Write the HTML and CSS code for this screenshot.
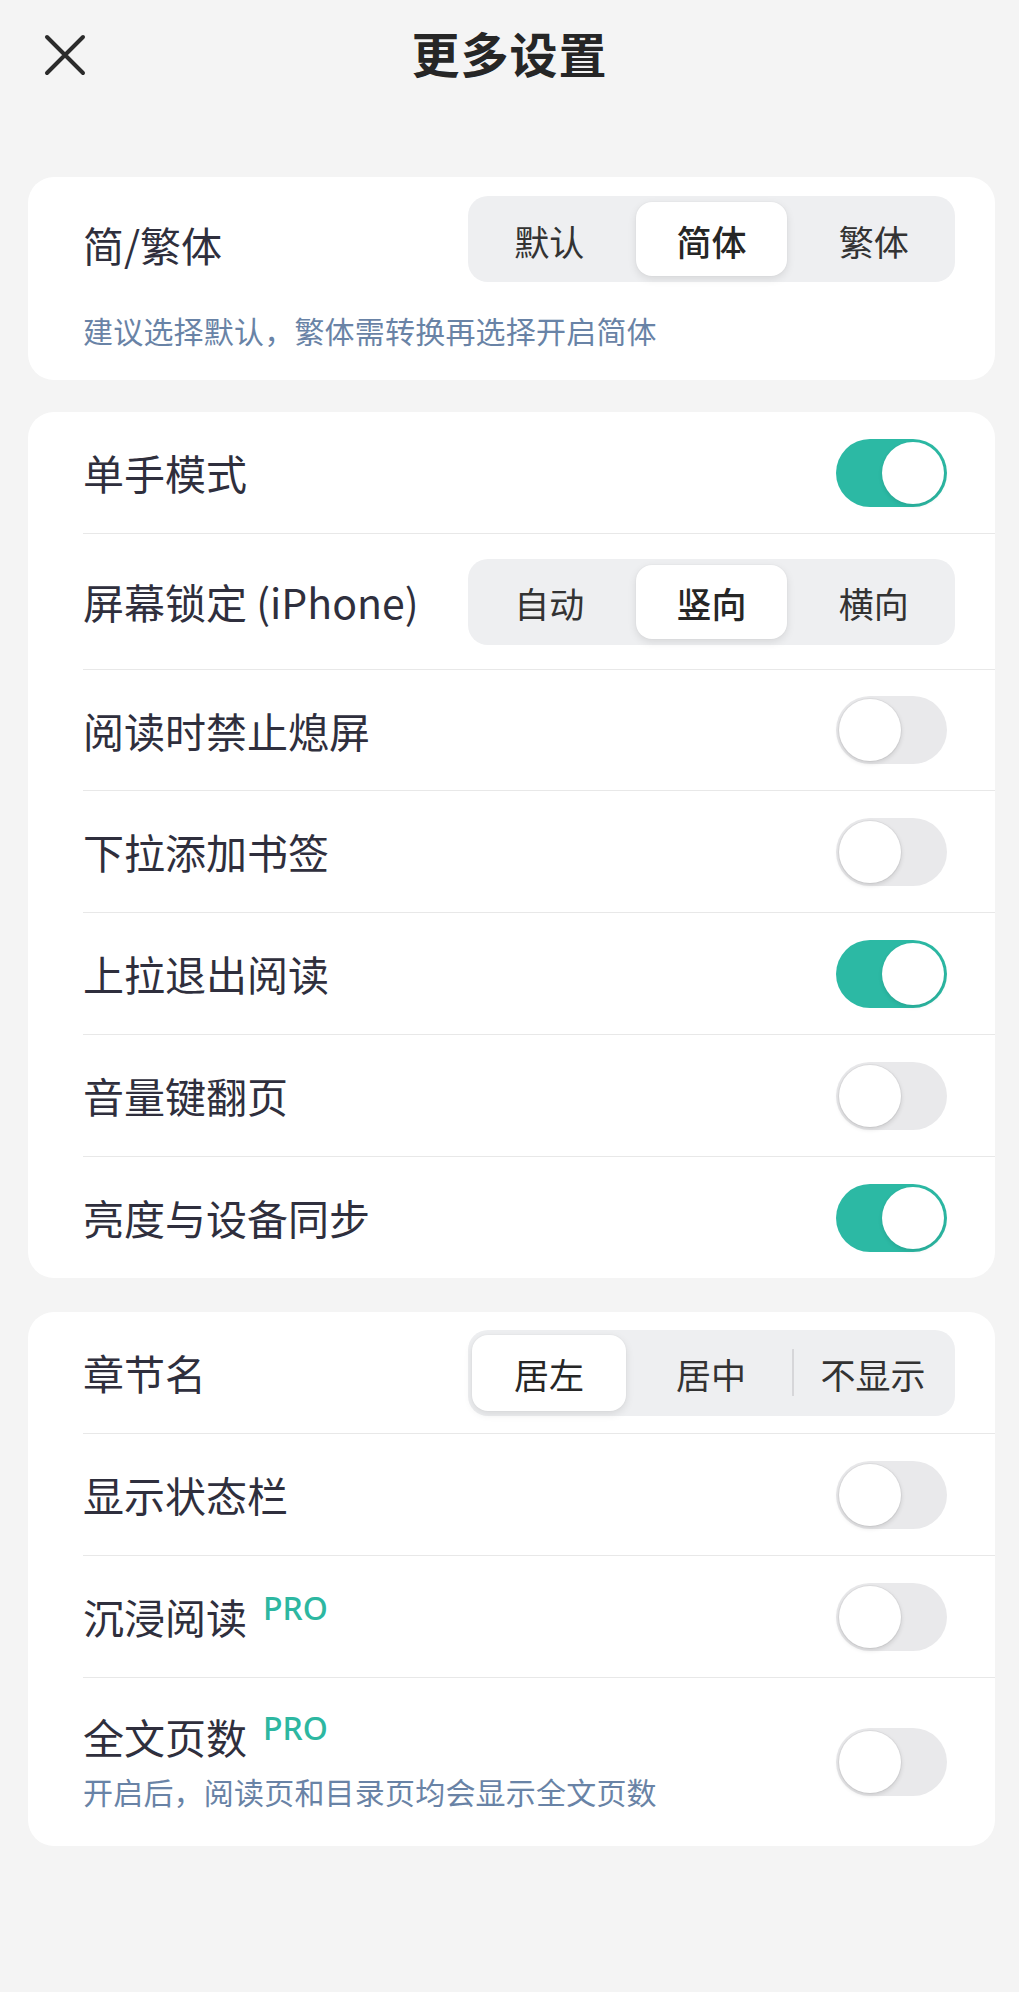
FILE: index.html
```html
<!DOCTYPE html>
<html lang="zh-CN">
<head>
<meta charset="utf-8">
<title>更多设置</title>
<link rel="stylesheet" href="styles.css">
</head>
<body>
<div class="page">
  <header class="header">
    <div class="close">
      <svg width="42" height="42" viewBox="0 0 42 42"><path d="M3 3 L39 39 M39 3 L3 39" stroke="#2b2b2b" stroke-width="4" stroke-linecap="round" fill="none"/></svg>
    </div>
    <h1 class="title">更多设置</h1>
    <div></div>
  </header>

  <section class="card card-first">
    <div class="row-simple">
      <span class="label">简/繁体</span>
      <div class="seg">
        <span class="seg-item">默认</span>
        <span class="seg-item active">简体</span>
        <span class="seg-item">繁体</span>
      </div>
    </div>
    <p class="hint hint-first">建议选择默认，繁体需转换再选择开启简体</p>
  </section>

  <section class="card card-second">
    <div class="row">
      <span class="label">单手模式</span>
      <span class="toggle on"><span class="knob"></span></span>
    </div>
    <div class="row tall">
      <span class="label">屏幕锁定 (iPhone)</span>
      <div class="seg">
        <span class="seg-item">自动</span>
        <span class="seg-item active">竖向</span>
        <span class="seg-item">横向</span>
      </div>
    </div>
    <div class="row short">
      <span class="label">阅读时禁止熄屏</span>
      <span class="toggle"><span class="knob"></span></span>
    </div>
    <div class="row">
      <span class="label">下拉添加书签</span>
      <span class="toggle"><span class="knob"></span></span>
    </div>
    <div class="row">
      <span class="label">上拉退出阅读</span>
      <span class="toggle on"><span class="knob"></span></span>
    </div>
    <div class="row">
      <span class="label">音量键翻页</span>
      <span class="toggle"><span class="knob"></span></span>
    </div>
    <div class="row short">
      <span class="label">亮度与设备同步</span>
      <span class="toggle on"><span class="knob"></span></span>
    </div>
  </section>

  <section class="card card-third">
    <div class="row">
      <span class="label">章节名</span>
      <div class="seg seg-tight">
        <span class="seg-item active plain">居左</span>
        <span class="seg-item">居中</span>
        <span class="seg-item sep">不显示</span>
      </div>
    </div>
    <div class="row">
      <span class="label">显示状态栏</span>
      <span class="toggle"><span class="knob"></span></span>
    </div>
    <div class="row">
      <div class="label-wrap">
        <span class="label">沉浸阅读</span>
        <span class="pro">PRO</span>
      </div>
      <span class="toggle"><span class="knob"></span></span>
    </div>
    <div class="row last">
      <div class="stack">
        <div class="label-wrap">
          <span class="label">全文页数</span>
          <span class="pro">PRO</span>
        </div>
        <p class="hint">开启后，阅读页和目录页均会显示全文页数</p>
      </div>
      <span class="toggle"><span class="knob"></span></span>
    </div>
  </section>
</div>
</body>
</html>
```

FILE: styles.css
```css
* { box-sizing: border-box; }

html, body {
  margin: 0;
  padding: 0;
  background: #f4f4f4;
}

body {
  font-family: "Noto Sans CJK SC", "Noto Sans", sans-serif;
  color: #2f2f3d;
}

.page {
  width: 1019px;
  min-height: 1992px;
  padding-bottom: 40px;
}

.header {
  height: 110px;
  display: grid;
  grid-template-columns: 1fr auto 1fr;
  align-items: center;
}

.close {
  padding-left: 44px;
  display: flex;
  align-items: center;
  height: 110px;
  margin-top: -1px;
}

.close svg { display: block; }

.title {
  margin: 0;
  font-size: 48px;
  font-weight: 700;
  color: #262626;
  line-height: 110px;
  letter-spacing: 1px;
  margin-top: -6px;
}

.card {
  background: #ffffff;
  margin-left: 28px;
  margin-right: 24px;
  border-radius: 26px;
  overflow: hidden;
}

.card-first {
  margin-top: 67px;
  padding: 19px 0 29px 55px;
}

.card-second { margin-top: 32px; }
.card-third { margin-top: 34px; }

.row-simple {
  display: flex;
  align-items: center;
  justify-content: space-between;
  height: 86px;
}

.row-simple .label { margin-top: 10px; }

.label {
  font-size: 41px;
  line-height: 49px;
  color: #2f2f3d;
  white-space: nowrap;
}

.hint {
  margin: 0;
  font-size: 30px;
  line-height: 42px;
  color: #6983a6;
  white-space: nowrap;
  letter-spacing: 0.2px;
}

.hint-first { margin-top: 27px; }

.row {
  display: flex;
  align-items: center;
  justify-content: space-between;
  height: 122px;
  margin-left: 55px;
  border-bottom: 1px solid #e8e8e8;
}

.row.tall { height: 136px; }
.row.short { height: 121px; }
.row:last-child { border-bottom: none; }
.row.last { height: 168px; padding-top: 0; }

.label-wrap {
  display: flex;
  align-items: flex-start;
}

.pro {
  font-family: "Noto Sans", "Noto Sans CJK SC", sans-serif;
  font-size: 32px;
  line-height: 32px;
  font-weight: 500;
  color: #2db7a1;
  margin-left: 16px;
  margin-top: 0;
}

.stack {
  display: flex;
  flex-direction: column;
  gap: 9px;
}

.seg {
  width: 487px;
  height: 86px;
  margin-right: 40px;
  background: #eeeff1;
  border-radius: 20px;
  padding: 6px;
  display: grid;
  grid-template-columns: 1fr 1fr 1fr;
  column-gap: 12px;
}

.seg-tight {
  padding: 5px 5px 5px 4px;
  column-gap: 8px;
}

.seg-item {
  display: flex;
  align-items: center;
  justify-content: center;
  font-size: 35px;
  color: #333333;
  border-radius: 16px;
  padding-top: 2px;
}

.seg-item.active {
  background: #ffffff;
  box-shadow: 0 3px 8px rgba(0, 0, 0, 0.10), 0 0 2px rgba(0, 0, 0, 0.05);
  font-weight: 500;
  color: #262626;
}

.seg-item.plain { font-weight: 400; }

.seg-item.sep {
  background: linear-gradient(#d6d6d9, #d6d6d9) left center / 2px 47px no-repeat;
  margin-left: -4px;
  padding-left: 4px;
}

.toggle {
  width: 111px;
  height: 68px;
  margin-right: 48px;
  border-radius: 34px;
  background: #e9e9eb;
  padding: 3px;
  display: flex;
  align-items: center;
  justify-content: flex-start;
  flex-shrink: 0;
}

.toggle.on {
  background: #2cb9a4;
  justify-content: flex-end;
}

.knob {
  width: 62px;
  height: 62px;
  border-radius: 50%;
  background: #ffffff;
  box-shadow: 0 2px 5px rgba(0, 0, 0, 0.14), 0 0 0 1px rgba(0, 0, 0, 0.04);
}

.toggle.on .knob {
  box-shadow: 0 2px 4px rgba(0, 0, 0, 0.10);
}
```
